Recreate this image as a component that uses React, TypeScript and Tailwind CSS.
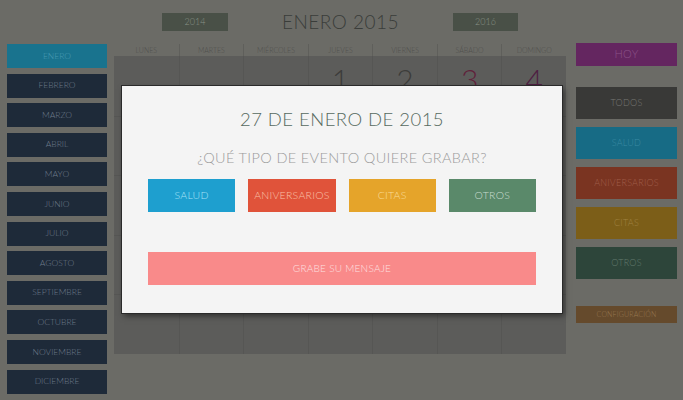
import React from "react";

const months = [
  "ENERO","FEBRERO","MARZO","ABRIL","MAYO","JUNIO","JULIO","AGOSTO","SEPTIEMBRE","OCTUBRE","NOVIEMBRE","DICIEMBRE",
];
const days = ["LUNES","MARTES","MIÉRCOLES","JUEVES","VIERNES","SÁBADO","DOMINGO"];

const font = { fontFamily: "Lato, 'Open Sans', sans-serif" };

export default function App() {
  const cells = Array.from({ length: 35 }, (_, i) => i);
  const nums: Record<number, { n: string; c: string }> = {
    3: { n: "1", c: "text-[#3d3d3b]" },
    4: { n: "2", c: "text-[#3d3d3b]" },
    5: { n: "3", c: "text-[#60223a]" },
    6: { n: "4", c: "text-[#4e2042]" },
  };
  return (
    <div className="relative w-[683px] h-[400px] overflow-hidden bg-[#6b6b66] font-light" style={font}>
      <div className="flex h-full">
        {/* left months */}
        <div className="w-[114px] pl-[7px] pt-[44px] flex flex-col gap-[5.6px]">
          {months.map((m, i) => (
            <div
              key={m}
              className={`w-[100px] h-[24px] flex items-center justify-center text-[8.5px] ${
                i === 0 ? "bg-[#19738e] text-[#4a9bb3]" : "bg-[#1e2a39] text-[#6f7c8c]"
              }`}
            >
              {m}
            </div>
          ))}
        </div>
        {/* center */}
        <div className="w-[452px] flex flex-col">
          <div className="h-[44px] flex items-start justify-center gap-[54px] pt-[13px]">
            <div className="w-[66px] h-[18px] bg-[#495047] text-[#889086] text-[9px] flex items-center justify-center">2014</div>
            <div className="text-[19px] leading-[18px] text-[#3a3d3a] tracking-wide">ENERO 2015</div>
            <div className="w-[65px] h-[18px] bg-[#495047] text-[#889086] text-[9px] flex items-center justify-center">2016</div>
          </div>
          <div className="h-[12px] grid grid-cols-7">
            {days.map((d, i) => (
              <div
                key={d}
                className={`flex items-center justify-center text-[7px] text-[#50504d] ${i > 0 ? "border-l border-[#5f5f5b]" : ""}`}
              >
                {d}
              </div>
            ))}
          </div>
          <div className="h-[298px] bg-[#5c5c5a] grid grid-cols-7 grid-rows-5">
            {cells.map((i) => (
              <div
                key={i}
                className={`border-[#565654] ${i % 7 !== 0 ? "border-l" : ""} ${i >= 7 ? "border-t" : ""} flex justify-center`}
              >
                {nums[i] && (
                  <span className={`text-[30px] leading-[30px] mt-[8px] ${nums[i].c}`}>{nums[i].n}</span>
                )}
              </div>
            ))}
          </div>
        </div>
        {/* right */}
        <div className="pl-[10px] pt-[43px] flex flex-col">
          <div className="w-[101px] h-[23px] bg-[#642660] text-[#8c5288] text-[11px] flex items-center justify-center tracking-wide">HOY</div>
          <div className="mt-[21px] flex flex-col gap-[8px]">
            {[
              ["TODOS", "bg-[#393937] text-[#767673]"],
              ["SALUD", "bg-[#176b85] text-[#3a8aa2]"],
              ["ANIVERSARIOS", "bg-[#7a3421] text-[#a05d49]"],
              ["CITAS", "bg-[#7c5e18] text-[#a08242]"],
              ["OTROS", "bg-[#2d453a] text-[#62796c]"],
            ].map(([t, c]) => (
              <div key={t} className={`w-[101px] h-[32px] flex items-center justify-center text-[9px] tracking-wide ${c}`}>
                {t}
              </div>
            ))}
          </div>
          <div className="mt-[27px] w-[101px] h-[17px] bg-[#654a2c] text-[#977850] text-[7px] flex items-center justify-center tracking-wide">
            CONFIGURACIÓN
          </div>
        </div>
      </div>

      {/* modal */}
      <div className="absolute left-[122px] top-[86px] w-[440px] h-[227px] bg-[#f4f4f4] shadow-[0_0_0_1px_#2a2a2a,2px_3px_6px_rgba(0,0,0,0.5)] flex flex-col items-center px-[26px]">
        <div className="mt-[21px] text-[18.5px] leading-[24px] text-[#566a60] tracking-wide">27 DE ENERO DE 2015</div>
        <div className="mt-[18px] text-[14.5px] leading-[18px] text-[#9b9b9b] tracking-wide">¿QUÉ TIPO DE EVENTO QUIERE GRABAR?</div>
        <div className="mt-[12px] flex gap-[13px] w-full">
          {[
            ["SALUD", "bg-[#1e9fcf] text-[#a8e2f6]"],
            ["ANIVERSARIOS", "bg-[#e0533a] text-[#f8c0a8]"],
            ["CITAS", "bg-[#e5a42a] text-[#f9dc9a]"],
            ["OTROS", "bg-[#5a896a] text-[#c8dccf]"],
          ].map(([t, c]) => (
            <div key={t} className={`flex-1 h-[33px] flex items-center justify-center text-[10.5px] tracking-wide ${c}`}>
              {t}
            </div>
          ))}
        </div>
        <div className="mt-[40px] w-full h-[33px] bg-[#f98a8a] text-[#fde0e0] text-[10px] flex items-center justify-center tracking-wide">
          GRABE SU MENSAJE
        </div>
      </div>
    </div>
  );
}
